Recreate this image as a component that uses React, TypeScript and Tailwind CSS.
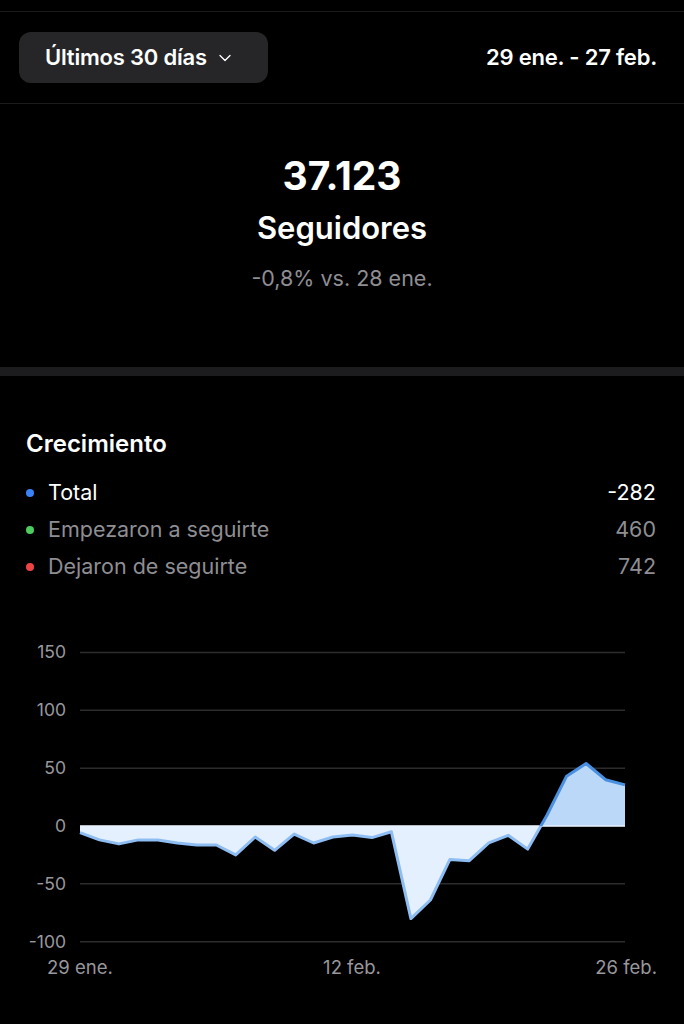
import { ChevronDown } from 'lucide-react';

const VALUES = [
  -5.8, -12, -15.5, -12, -12, -14.7, -16.4, -16.4, -25, -9.5, -21, -7, -14.7, -9.5, -7.8, -10, -5, -80,
  -64, -29, -30, -14.5, -8, -20, 9.5, 43, 54, 40, 35.5,
];

const LEGEND = [
  { label: 'Total', value: '-282', dot: 'bg-[#3b82f6]', text: 'text-white' },
  { label: 'Empezaron a seguirte', value: '460', dot: 'bg-[#4ccd5e]', text: 'text-[#8e8e93]' },
  { label: 'Dejaron de seguirte', value: '742', dot: 'bg-[#ee4444]', text: 'text-[#8e8e93]' },
];

const TICKS = [150, 100, 50, 0, -50, -100];

// chart geometry (svg coords)
const X0 = 80;
const X1 = 625;
const ZERO = 206;
const UNIT = 1.157;

function yOf(v: number) {
  return ZERO - v * UNIT;
}

function GrowthChart() {
  const step = (X1 - X0) / (VALUES.length - 1);
  const pts = VALUES.map((v, i) => [X0 + i * step, yOf(v)] as const);
  const line = pts.map(([x, y], i) => `${i === 0 ? 'M' : 'L'}${x.toFixed(1)},${y.toFixed(1)}`).join(' ');
  const area = `${line} L${X1},${ZERO} L${X0},${ZERO} Z`;

  return (
    <svg width="684" height="380" viewBox="0 0 684 380" className="block">
      <defs>
        <clipPath id="above">
          <rect x="0" y="0" width="684" height={ZERO} />
        </clipPath>
        <clipPath id="below">
          <rect x="0" y={ZERO} width="684" height={380 - ZERO} />
        </clipPath>
      </defs>
      {TICKS.map((t) => (
        <g key={t}>
          <line x1={X0} x2={X1} y1={yOf(t)} y2={yOf(t)} stroke="#2c2c2e" strokeWidth="1.5" />
          <text
            x="66"
            y={yOf(t) + 6}
            textAnchor="end"
            fill="#98989d"
            fontSize="17.5"
            fontFamily="Inter, 'Noto Sans', sans-serif"
          >
            {t}
          </text>
        </g>
      ))}
      <path d={area} fill="#bcd8f9" clipPath="url(#above)" />
      <path d={area} fill="#e4f0fd" clipPath="url(#below)" />
      <line x1={X0} x2={X1} y1={ZERO} y2={ZERO} stroke="#e8f1fc" strokeWidth="1.5" />
      <path d={line} fill="none" stroke="#4a90e2" strokeWidth="3" strokeLinejoin="round" clipPath="url(#above)" />
      <path d={line} fill="none" stroke="#8dbdf2" strokeWidth="3" strokeLinejoin="round" clipPath="url(#below)" />
      <g fill="#98989d" fontSize="18.5" fontFamily="Inter, 'Noto Sans', sans-serif">
        <text x="47" y="354">29 ene.</text>
        <text x="352" y="354" textAnchor="middle">12 feb.</text>
        <text x="657" y="354" textAnchor="end">26 feb.</text>
      </g>
    </svg>
  );
}

export default function App() {
  return (
    <div className="h-[1024px] w-[684px] overflow-hidden bg-black font-['Inter','Noto_Sans',sans-serif] text-white">
      <div className="h-3 border-b border-[#1c1c1e]" />
      <div className="flex h-[92px] items-center justify-between border-b border-[#1c1c1e] pl-[19px] pr-[27px]">
        <button className="flex h-[51px] w-[249px] items-center gap-2 rounded-xl bg-[#262628] pl-[26px] text-[22px] font-semibold tracking-[-0.2px]">
          Últimos 30 días
          <ChevronDown size={20} strokeWidth={1.6} />
        </button>
        <span className="text-[22px] font-semibold tracking-[-0.2px]">29 ene. - 27 feb.</span>
      </div>
      <div className="flex h-[263px] flex-col items-center pt-[48px]">
        <span className="text-[39px] font-bold leading-[48px]">37.123</span>
        <span className="mt-[8px] text-[31px] font-semibold leading-[40px]">Seguidores</span>
        <span className="mt-[16px] text-[21.5px] leading-[28px] text-[#8e8e93]">-0,8% vs. 28 ene.</span>
      </div>
      <div className="h-[9px] bg-[#1c1c1e]" />
      <div className="px-[26px] pt-[53px]">
        <h2 className="text-[24px] font-semibold leading-[30px]">Crecimiento</h2>
        <ul className="mt-[15px]">
          {LEGEND.map((row) => (
            <li key={row.label} className="flex h-[37px] items-center justify-between pr-0.5">
              <div className="flex items-center gap-[14px]">
                <span className={`h-2 w-2 rounded-full ${row.dot}`} />
                <span className={`text-[21.5px] ${row.text}`}>{row.label}</span>
              </div>
              <span className={`text-[21.5px] ${row.text}`}>{row.value}</span>
            </li>
          ))}
        </ul>
      </div>
      <div className="mt-[35px]">
        <GrowthChart />
      </div>
    </div>
  );
}
